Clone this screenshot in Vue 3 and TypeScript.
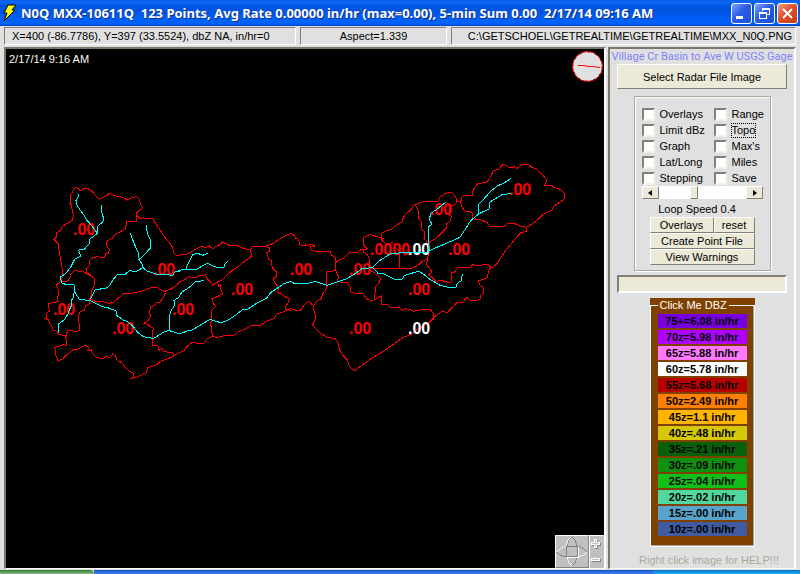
<script setup lang="ts">
import { ref } from 'vue'

interface Sheet {
  x: number
  y: number
  basins: string[]
  streams: string[]
}

interface Rate {
  x: number
  y: number
  bright?: boolean
}

// Each survey sheet has its own origin; its points are in thirds of a map unit.
const sheets: Sheet[] = [
  {
    x: 30,
    y: 180,
    basins: [
      '92,304 98,290 96,262 92,240 88,215 84,190 72,178 80,170 80,158 94,150 96,140 108,132 126,122 130,106 126,88 126,76 120,70 122,44 128,36 130,28 138,22 146,26 150,33 162,26 172,25 184,32 196,46 208,58 220,52 232,46 238,40 250,46 268,50 280,52 290,60 302,54 320,50 328,58 332,72 338,86 326,92 319,100 320,106 330,116 340,112 346,118 356,114 368,116 378,132 388,146 396,160 408,176 420,190 428,202 432,220 440,226 450,226',
      '319,104 320,116 318,126 290,126 286,146 276,152 262,160 250,168 246,176 232,182 228,190 232,202 238,208 236,220 226,222 224,234 214,234 206,230 190,232 180,240 178,258 168,266 170,278 182,284 184,290 192,294',
      '92,304 104,306 116,300 124,280 136,270 150,275 158,272 168,280',
    ],
    streams: [
      '144,42 146,48 138,62 140,74 152,92 164,108 170,120 184,136 196,152 202,160',
      '214,76 216,100 221,116 218,126 204,138 202,160 190,170 178,178 178,190 168,202 162,208 146,210 152,228 134,238 124,258 106,282 92,290 94,308',
      '301,160 306,174 314,194 324,216 328,240 336,252 338,262 352,274 372,280 384,284 398,282 428,286 434,276 450,275',
      '349,136 352,160 362,180 362,204 352,214 340,228 326,240',
      '338,262 330,268 314,276 300,270 284,284 262,284 250,298 238,318 226,326 200,328',
    ],
  },
  {
    x: 30,
    y: 270,
    basins: [
      '92,34 78,46 86,62 86,74 82,84 84,94 70,98 56,100 54,112 60,122 50,130 50,144 44,146 56,150 58,158 66,170 68,180 80,184 84,192 108,198 108,208 110,226 100,224 86,230 72,232 76,240 76,252 84,272 98,268 106,258 118,248 130,238 142,238 154,232 166,226 176,232 178,242 170,242 184,240 188,250 196,260 206,264 220,266 228,260 240,262 248,252 256,258 262,272 276,278 284,290 296,302 312,310 310,322 300,326 320,322 334,314 350,308 352,294 364,290 380,284 390,274 408,268 424,262 434,256 446,250 462,242 470,230 486,218 510,220',
      '168,10 180,16 192,24 194,44 186,60 186,74 178,90 180,100 166,108 164,120 150,126 145,140 146,156 150,170 148,182 136,186 120,180 112,184 108,200',
      '178,86 196,94 214,94 238,100 252,96 266,84 280,72 300,70 316,68 340,62 364,52 384,54 392,60 406,66',
      '406,68 400,82 390,96 378,98 374,106 362,110 358,130 362,136 356,150 342,160 352,162 360,170 370,174 368,184 368,226 384,228 388,242 396,234 400,246 412,246 428,248 434,258',
    ],
    streams: [
      '92,24 94,38 108,44 132,45 134,66 148,88 180,92 198,100 216,110 230,112 258,122 260,136 280,150 294,156 310,170 322,186 340,200 370,205 390,194 404,184 418,182 450,192 468,184 486,180 510,166',
      '132,70 130,82 124,92 126,104 118,120 114,132 104,148 86,162 86,190',
      '182,86 190,70 196,58 226,56',
      '418,182 418,140 422,124 434,106 432,92 446,82 456,66 478,52 496,36 510,34',
    ],
  },
  {
    x: 130,
    y: 200,
    basins: [
      '150,165 168,164 184,156 196,148 212,140 230,142 238,138 248,146 260,138 268,136 278,126 292,134 306,138 322,136 340,146 354,148 362,150 366,140 380,138 404,140 430,130 446,118 464,108 484,100',
      '362,150 364,168 356,176 340,186 324,200 308,210 290,226 276,240 262,246 248,256 240,244 232,236 226,224 206,228 194,234 176,230 162,240 148,246 138,258 120,268 104,274',
      '210,430 222,430 230,418 246,410 262,412 280,408 304,408 318,402 326,394 344,388 368,376 392,376 408,364 432,356 440,342 464,334 470,328 482,332',
      '262,246 266,258 272,254 272,268 278,280 262,290 246,296 250,310 256,320 244,332 244,360 242,372 248,410',
      '404,140 420,142 418,154 410,158 416,178 424,182 424,192 428,204 438,214 440,228 430,238 436,250 446,268 442,278 456,282 464,290 478,296 474,310 466,320 466,332',
    ],
    streams: [
      '138,216 158,208 200,208 216,198 232,190 248,198 262,202 282,202 286,190 294,184',
      '168,206 176,188 188,164 204,160 218,166 234,160',
      '210,244 222,240',
      '210,376 240,358 272,368 292,362 316,346 336,330 352,328 380,310 410,294 422,278 440,266',
    ],
  },
  {
    x: 270,
    y: 220,
    basins: [
      '62,40 72,46 76,54 86,58 90,74 104,78 108,72 114,78 120,72 136,78 122,80 124,92 150,96 182,96 184,106 196,112 196,146 200,160 206,170 202,182 214,188 232,188 240,200 242,216 256,220 280,222 288,234 302,244 320,236 334,228 334,252 352,254 364,264 380,264 388,260 396,272 408,266 424,270 430,274 450,270 482,270 490,280 490,294 476,308 460,318 440,330 426,342 400,352 380,366 340,394 300,418 254,452 240,442 232,420 218,406 208,388 204,368 196,356 172,352 146,336 128,316 138,292 134,278 128,262 140,244 152,238 158,222 166,212 170,200 170,156 196,152',
      '196,130 206,120 220,116 238,98 264,96 274,88 284,90 292,86 280,74 280,52 300,44 320,50 340,56 334,60 346,70 360,76 364,66 370,70 378,84 388,92 390,144',
      '334,62 334,40 350,32 364,28 376,18 396,6 398,0',
      '282,86 280,96 292,104 300,120 296,138 300,152 316,160 332,176 326,190 316,200 314,240',
      '290,145 424,145 446,134 456,124 470,118',
      '46,272 64,266 82,272 92,270 106,250 118,244 128,256',
    ],
    streams: [
      '20,206 40,192 62,184 72,190 114,190 136,184 172,196 200,186 230,176 254,162 276,146 308,143 324,160 342,162 366,174 380,180 396,178 404,166 424,160 446,154',
      '308,143 328,122 364,100 410,98 474,98',
    ],
  },
  {
    x: 400,
    y: 150,
    basins: [
      '6,216 10,202 20,190 34,178 40,166 60,158 80,154 104,156 116,152 118,142 136,130 152,126 164,136 170,148 170,156 182,156',
      '170,158 160,166 142,164 150,170 146,194 154,198 152,212 140,222 140,234 120,254 104,268 88,276 86,292',
      '182,160 184,144 190,136 216,138 220,118 234,100 258,98 270,84 280,62 296,58 310,42 330,54 344,50 350,56 366,44 384,42 396,52 410,56 414,64 428,74 440,90 434,106 456,106 462,112 480,118 494,130 494,146 480,156 462,168 456,180 428,194 414,208 390,226 378,232 360,228 342,220 322,222 310,230 290,228 270,230 262,218 244,210 228,210 218,204 218,190 208,184 196,184 186,172 182,160',
      '46,164 54,180 56,204 66,218 66,240 74,244 72,266 80,276 84,290',
      '378,232 380,244 362,248 344,268 330,286 314,306 300,326 292,340 278,352 272,354',
      '86,306 84,318',
    ],
    streams: [
      '86,306 86,230 96,222 88,210 92,190 108,180 120,170 138,156',
      '86,304 100,296 130,284 180,262 196,238 212,212 236,192 268,176 270,156 290,144 306,134 334,130',
      '236,192 236,164 254,144 272,124 292,108 314,98 334,84',
    ],
  },
  {
    x: 390,
    y: 250,
    basins: [
      '114,18 110,44 116,52 126,66 116,74 132,88 140,96 150,90 164,94 178,98 184,96 184,68 194,66 204,52 218,54 240,54 250,42 260,48 280,44 296,44 302,52 296,62 292,82 280,88 266,92 268,104 280,112 282,128 272,136 270,148 260,152 240,150 230,142 220,156 200,158 190,170 180,178 172,188 156,184 134,200 130,210',
    ],
    streams: ['86,64 100,72 120,88 150,106 176,112 198,112 202,100 214,92 217,72'],
  },
]

const rates: Rate[] = [
  { x: 73, y: 235 },
  { x: 153, y: 275 },
  { x: 53, y: 315 },
  { x: 112, y: 334 },
  { x: 172, y: 315 },
  { x: 231, y: 295 },
  { x: 290, y: 275 },
  { x: 349, y: 275 },
  { x: 370, y: 255 },
  { x: 388, y: 255 },
  { x: 448, y: 255 },
  { x: 430, y: 215 },
  { x: 509, y: 195 },
  { x: 408, y: 295 },
  { x: 349, y: 334 },
  { x: 408, y: 255, bright: true },
  { x: 408, y: 334, bright: true },
]

const options = ref([
  { label: 'Overlays', on: false },
  { label: 'Range', on: false },
  { label: 'Limit dBz', on: false },
  { label: 'Topo', on: false },
  { label: 'Graph', on: false },
  { label: "Max's", on: false },
  { label: 'Lat/Long', on: false },
  { label: 'Miles', on: false },
  { label: 'Stepping', on: false },
  { label: 'Save', on: false },
])

const speed = ref(0.4)
const step = (by: number) => {
  speed.value = Math.min(1, Math.max(0, Math.round((speed.value + by) * 10) / 10))
}

const scale = [
  { text: '75+=6.08 in/hr', color: '#7800e0' },
  { text: '70z=5.98 in/hr', color: '#b000ff' },
  { text: '65z=5.88 in/hr', color: '#ff78ff' },
  { text: '60z=5.78 in/hr', color: '#ffffff' },
  { text: '55z=5.68 in/hr', color: '#b80000' },
  { text: '50z=2.49 in/hr', color: '#ff8000' },
  { text: '45z=1.1 in/hr', color: '#ffb400' },
  { text: '40z=.48 in/hr', color: '#d4c808' },
  { text: '35z=.21 in/hr', color: '#086008' },
  { text: '30z=.09 in/hr', color: '#109010' },
  { text: '25z=.04 in/hr', color: '#10c018' },
  { text: '20z=.02 in/hr', color: '#50d8a0' },
  { text: '15z=.00 in/hr', color: '#58a4cc' },
  { text: '10z=.00 in/hr', color: '#405ca0' },
]
</script>

<template>
  <div class="window">
    <header class="titlebar">
      <svg class="bolt" width="16" height="18" viewBox="0 0 16 18" aria-hidden="true">
        <path d="M6 1h8l-4 5h3L2 17l3-8H2z" fill="#ff0" stroke="#000" stroke-width="1" />
      </svg>
      <h1>N0Q MXX-10611Q&nbsp; 123 Points, Avg Rate 0.00000 in/hr (max=0.00), 5-min Sum 0.00&nbsp; 2/17/14 09:16 AM</h1>
      <div class="controls">
        <button type="button" aria-label="Minimize">
          <svg width="19" height="19" viewBox="0 0 19 19"><path d="M4 12h7v3H4z" fill="#fff" /></svg>
        </button>
        <button type="button" aria-label="Restore">
          <svg width="19" height="19" viewBox="0 0 19 19" fill="none" stroke="#fff" shape-rendering="crispEdges">
            <path d="M7.500 7V4.500h7v6H12M7 5.500h8M4.500 8.500h7v6h-7zM4 9.500h8" />
          </svg>
        </button>
        <button type="button" class="close" aria-label="Close">
          <svg width="19" height="19" viewBox="0 0 19 19"><path d="M5 5l9 9M14 5l-9 9" stroke="#fff" stroke-width="2" /></svg>
        </button>
      </div>
    </header>

    <div class="status">
      <div class="cell position">X=400 (-86.7786), Y=397 (33.5524), dbZ NA, in/hr=0</div>
      <div class="cell aspect">Aspect=1.339</div>
      <div class="cell path">C:\GETSCHOEL\GETREALTIME\GETREALTIME\MXX_N0Q.PNG</div>
    </div>

    <main class="main">
      <section class="map">
        <svg class="chart" viewBox="6 49 598 519" preserveAspectRatio="xMinYMin meet" role="img" aria-label="Basin map">
          <g shape-rendering="crispEdges">
            <g v-for="(s, i) in sheets" :key="i" :transform="`translate(${s.x} ${s.y}) scale(0.33333)`" class="basin">
              <polyline v-for="(p, j) in s.basins" :key="j" :points="p" />
            </g>
          </g>
          <text v-for="(r, i) in rates" :key="i" :x="r.x" :y="r.y" class="rate" :class="{ bright: r.bright }">.00</text>
          <g shape-rendering="crispEdges">
            <g v-for="(s, i) in sheets" :key="i" :transform="`translate(${s.x} ${s.y}) scale(0.33333)`" class="stream">
              <polyline v-for="(p, j) in s.streams" :key="j" :points="p" />
            </g>
          </g>
          <text x="9" y="63" class="stamp">2/17/14 9:16 AM</text>
          <circle cx="587.500" cy="66.500" r="15" fill="#e0e0e0" stroke="#f00" />
          <circle cx="587.500" cy="66.500" r="14.500" fill="none" stroke="#000" stroke-dasharray="1.500 6.090" />
          <path d="M578 65.500h5l6 1h4l7 1" stroke="#f00" fill="none" />
        </svg>
        <div class="nav">
          <button type="button" class="pan" aria-label="Pan">
            <svg width="32" height="31" viewBox="0 0 32 31" fill="none">
              <path d="M11 10l2-6 3-3 3 3 2 6M11 21l2 6 3 3 3-3 2-6M10 10l-6 3-3 3 3 3 6 2M22 10l6 3 3 3-3 3-6 2" stroke="#808080" />
              <path d="M10 10l2-6 3-3M10 10l-6 3-3 3M11 21l2 6 3 3M22 21l6-2 3-3" stroke="#fff" />
              <rect x="10.500" y="10.500" width="11" height="10" stroke="#808080" />
              <path d="M10.500 21.500h12v-11" stroke="#fff" />
            </svg>
          </button>
          <div class="zoom">
            <button type="button" aria-label="Zoom in">
              <svg width="11" height="13" viewBox="0 0 11 13">
                <path d="M4 3h3v3h3v3H7v3H4V9H1V6h3z" fill="#808080" />
                <path d="M3 2h3v3h3v3H6v3H3V8H0V5h3z" fill="#fff" />
                <path d="M4 3h1v3h3v1H5v3H4V7H1V6h3z" fill="#c0c0c0" />
              </svg>
            </button>
            <button type="button" aria-label="Zoom out">
              <svg width="11" height="13" viewBox="0 0 11 13">
                <path d="M1 6h9v3H1z" fill="#808080" />
                <path d="M0 5h9v3H0z" fill="#fff" />
                <path d="M1 6h7v1H1z" fill="#c0c0c0" />
              </svg>
            </button>
          </div>
        </div>
      </section>

      <aside class="side">
        <h2>Village Cr Basin to Ave W USGS Gage</h2>
        <button type="button" class="btn select">Select Radar File Image</button>

        <div class="panel">
          <div class="options">
            <label v-for="o in options" :key="o.label">
              <input v-model="o.on" type="checkbox" />
              <span :class="{ focus: o.label === 'Topo' }">{{ o.label }}</span>
            </label>
          </div>
          <div class="scroll">
            <button type="button" aria-label="Slower" @click="step(-0.1)">
              <svg width="5" height="6" viewBox="0 0 5 6"><path d="M4 0v6L0 3z" /></svg>
            </button>
            <input id="speed" v-model.number="speed" type="range" min="0" max="1" step="0.1" />
            <button type="button" aria-label="Faster" @click="step(0.1)">
              <svg width="5" height="6" viewBox="0 0 5 6"><path d="M1 0v6l4-3z" /></svg>
            </button>
          </div>
          <label class="speed" for="speed">Loop Speed {{ speed }}</label>
          <div class="actions">
            <button type="button" class="btn">Overlays</button>
            <button type="button" class="btn">reset</button>
            <button type="button" class="btn wide">Create Point File</button>
            <button type="button" class="btn wide">View Warnings</button>
          </div>
        </div>

        <input class="entry" type="text" aria-label="Message" />

        <div class="legend">
          <fieldset>
            <legend>Click Me DBZ</legend>
            <button v-for="s in scale" :key="s.text" type="button" :style="{ background: s.color }">{{ s.text }}</button>
          </fieldset>
        </div>

        <p class="help">Right click image for HELP!!!</p>
      </aside>
    </main>

    <footer class="taskbar">
      <div class="start"></div>
      <div class="tasks"></div>
      <div class="tray"></div>
    </footer>
  </div>
</template>

<style>
body {
  background: #e0e0e0;
}
</style>

<style scoped>
* {
  box-sizing: border-box;
}

.window {
  display: flex;
  flex-direction: column;
  background: #e0e0e0;
  color: #000;
  font-family: "Liberation Sans", Arial, sans-serif;
  font-size: 11px;
  line-height: 14px;
}

button,
input {
  margin: 0;
  padding: 0;
  border: 0;
  border-radius: 0;
  color: inherit;
  font: inherit;
}

svg {
  display: block;
}

.titlebar {
  display: flex;
  align-items: center;
  gap: 3px;
  height: 26px;
  padding: 0 2px;
  background: linear-gradient(#0a5ce8 0, #0a68f8 2px, #0055e0 6px, #0054e2 12px, #0062fa 20px, #0060f8 24px, #0040c0 26px);
}

.titlebar h1 {
  flex: 1;
  margin: 0;
  overflow: hidden;
  color: #fff;
  font-family: "Noto Sans", sans-serif;
  font-size: 13px;
  line-height: 18px;
  white-space: nowrap;
  text-shadow: 1px 1px 0 #10308c;
}

.controls {
  display: flex;
  gap: 2px;
}

.controls button {
  width: 21px;
  height: 21px;
  border: 1px solid #fff;
  border-radius: 3px;
  background: linear-gradient(135deg, #7ca4f4, #2a5ce4 45%, #1c50d8);
}

.controls .close {
  background: linear-gradient(135deg, #f0a088, #e0502c 45%, #c83c14);
}

.status {
  display: grid;
  grid-template-columns: minmax(0, 292fr) minmax(0, 147fr) minmax(0, 345fr);
  gap: 4px;
  padding: 1px 4px 2px;
}

.cell {
  height: 18px;
  overflow: hidden;
  border: 1px solid;
  border-color: #808078 #fff #fff #808078;
  line-height: 16px;
  white-space: nowrap;
}

.position {
  padding-left: 7px;
}

.aspect {
  text-align: center;
}

.path {
  padding-right: 3px;
  text-align: right;
}

.main {
  display: flex;
  gap: 2px;
  padding: 0 4px;
}

.map {
  position: relative;
  flex: 1;
  min-width: 0;
  border: solid;
  border-width: 2px 2px 1px;
  border-color: #787868 #fff #fff #787868;
  background: #000;
}

.chart {
  width: 100%;
}

.basin,
.stream {
  fill: none;
  stroke: #f00;
}

.stream {
  stroke: #0ff;
}

.basin polyline,
.stream polyline {
  vector-effect: non-scaling-stroke;
}

.rate {
  fill: #f00;
  font-size: 16px;
  font-weight: bold;
}

.bright {
  fill: #fff;
}

.stamp {
  fill: #fffbf0;
  font-size: 11px;
}

.nav {
  position: absolute;
  right: 0;
  bottom: 0;
  display: flex;
  background: #c0c0c0;
}

.nav button {
  display: block;
  background: #c0c0c0;
}

.pan {
  border: 1px solid;
  border-color: #fff #808080 #808080 #fff;
}

.zoom {
  display: flex;
  flex-direction: column;
  justify-content: space-around;
  padding: 0 1px;
  border: 1px solid;
  border-color: #fff #c0c0c0 #c0c0c0 #fff;
}

.side {
  display: flex;
  flex: 0 0 188px;
  flex-direction: column;
  align-items: center;
  min-width: 0;
  border: solid;
  border-width: 2px 2px 1px;
  border-color: #787868 #fff #fff #787868;
}

.side h2 {
  margin: 1px 0 0;
  color: #8080ff;
  font-family: Roboto, "Liberation Sans", sans-serif;
  font-size: 11px;
  font-weight: normal;
  line-height: 14px;
  white-space: nowrap;
}

.btn {
  border: 1px solid;
  border-color: #fff #808078 #808078 #fff;
  background: #ece9d8;
}

.select {
  width: 170px;
  height: 25px;
}

.panel {
  width: 137px;
  margin-top: 7px;
  padding: 9px 7px 5px;
  border: 1px solid #aca899;
  box-shadow: 1px 1px 0 #fff, inset 1px 1px 0 #fff;
}

.options {
  display: grid;
  grid-template-columns: 72px 1fr;
}

.options label {
  display: flex;
  align-items: center;
  gap: 4px;
  height: 16px;
  white-space: nowrap;
}

.options input {
  flex: none;
  width: 13px;
  height: 13px;
  appearance: none;
  border: 2px solid;
  border-color: #808078 #f4f2e8 #f4f2e8 #808078;
  background: #fff;
}

.options span {
  border: 1px solid transparent;
  line-height: 13px;
}

.options .focus {
  border: 1px dotted #000;
}

.scroll {
  display: flex;
  height: 13px;
}

.scroll button {
  display: grid;
  flex: 0 0 17px;
  place-items: center;
  border: 1px solid;
  border-color: #fff #808078 #808078 #fff;
  background: #ece9d8;
}

.scroll input {
  flex: 1;
  min-width: 0;
  appearance: none;
  background: #fff;
}

.scroll input::-webkit-slider-thumb {
  width: 8px;
  height: 13px;
  appearance: none;
  border: 1px solid;
  border-color: #fff #808078 #808078 #fff;
  background: #ece9d8;
}

.speed {
  display: block;
  padding: 3px 10px 1px 0;
  text-align: center;
}

.actions {
  display: grid;
  grid-template-columns: 64px 41px;
  grid-auto-rows: 16px;
  justify-content: center;
}

.actions .wide {
  grid-column: span 2;
}

.entry {
  width: 170px;
  height: 18px;
  margin-top: 4px;
  border: 2px solid;
  border-color: #808078 #fff #fff #808078;
  background: #ece9d8;
}

.legend {
  width: 105px;
  margin-top: 5px;
  background: #804000;
}

fieldset {
  display: flex;
  flex-direction: column;
  gap: 2px;
  min-width: 0;
  margin: 0;
  padding: 2px 7px 10px;
  border: 1px solid #fff;
  box-shadow: inset -1px -1px 0 #aca899;
}

legend {
  padding: 0 2px;
  color: #fff;
  line-height: 14px;
}

fieldset button {
  height: 14px;
  color: #000;
  font-size: 11px;
  font-weight: bold;
  line-height: 14px;
  white-space: nowrap;
}

.help {
  margin: 6px 0 0;
  padding-left: 14px;
  color: #aca899;
  white-space: nowrap;
}

.taskbar {
  display: flex;
  height: 4px;
  margin-top: 1px;
}

.start {
  flex: 94 1 0;
  border-radius: 0 4px 0 0;
  background: linear-gradient(#2e7c2e, #88bc88);
}

.tasks {
  flex: 559 1 0;
  background: linear-gradient(#1c50c8, #3c84f0);
}

.tray {
  flex: 147 1 0;
  background: linear-gradient(#0c70c8, #18b0f4);
}
</style>
